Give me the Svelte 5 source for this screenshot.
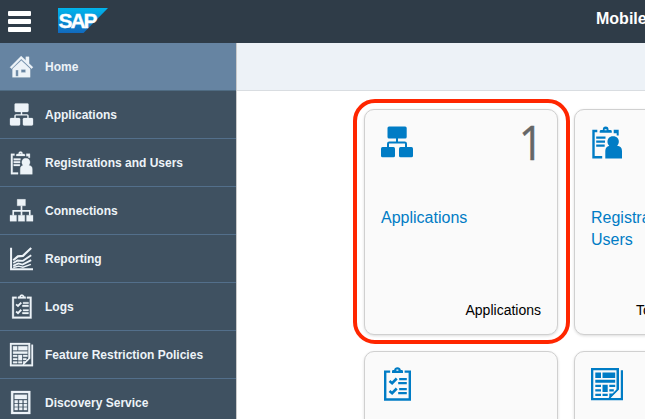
<script>
  const nav = [
    ['Home', 'home'],
    ['Applications', 'apps'],
    ['Registrations and Users', 'users'],
    ['Connections', 'tree'],
    ['Reporting', 'chart'],
    ['Logs', 'logs'],
    ['Feature Restriction Policies', 'policy'],
    ['Discovery Service', 'calc']
  ];
  const tiles = [
    { icon: 'apps', title: 'Applications', value: '1', foot: 'Applications', marked: true },
    { icon: 'users', title: 'Registrations and Users', foot: 'Total Registrations', shift: true },
    { icon: 'logs', title: 'Logs' },
    { icon: 'policy', title: 'Feature Restriction Policies' }
  ];
</script>

{#snippet icon(name, size)}
  <svg class="icon" width={size} height={size} viewBox="0 0 32 32" fill="currentColor" aria-hidden="true">
    {#if name === 'home'}
      <path d="M0 17 15.500 1.500l6.500 6V2.500h4.500v9.200L32 17l-2 2L15.700 5.600 2 19z" />
      <path fill-rule="evenodd" d="M3.500 19.300 15.700 7.600 28 19.300V31H3.500zM8 21v8.700h3.500V21zM15.500 20v4.200h6.200V20z" />
    {:else if name === 'apps'}
      <rect x="6.500" y="0.600" width="19.200" height="11.800" rx="1.500" />
      <rect x="0" y="21" width="14" height="10.200" rx="1.500" />
      <rect x="18" y="21" width="14" height="10.200" rx="1.500" />
      <path fill="none" stroke="currentColor" stroke-width="2" d="M16 12v4.500M7 21.500v-3.700q0-1.300 1.300-1.300h15.400q1.300 0 1.300 1.300v3.700" />
    {:else if name === 'users'}
      <path d="M1.300 3.800h5v2.400H3.700v23.700h7.500v2.500H1.300zM22.700 3.800h5v5.700h-2V7.200h-3z" />
      <path fill-rule="evenodd" d="M8.700 6.800V5.200q0-1.200 1.400-1.200h1.700a2.900 3.400 0 0 1 5.800 0h1.800q1.400 0 1.400 1.200v1.600zM13.600 3.200v1.100h2V3.200z" />
      <path d="M5.200 10.400h9.300v2.300H5.200zM5.200 14.400h8.800v2.300H5.200zM5.200 18.400h8.500v2.300H5.200z" />
      <path d="M22 10.200c4 0 6.200 2.700 5.800 6-.2 1.500-.8 2.600-1.700 3.600 3.200.5 4.900 2 4.900 5.200v7.400H14.300V25c0-3 1.500-4.600 4-5.200-1-1-1.700-2.100-1.800-3.600-.3-3.300 1.800-6 5.500-6z" />
    {:else if name === 'tree'}
      <path d="M10 .5h11.500v9H10zM0 22.500h9v8.500H0zM11.500 22.500h9v8.500h-9zM23 22.500h9v8.500h-9z" />
      <path fill="none" stroke="currentColor" stroke-width="2.300" d="M16 9v14M4.500 23v-6.500h23V23" />
    {:else if name === 'chart'}
      <path fill="none" stroke="currentColor" stroke-width="2.800" d="M1.500 1v30H32" />
      <path fill="none" stroke="currentColor" stroke-width="3" d="M4.500 18.500 11 13l7-.7L29.500 1.500" />
      <path fill="none" stroke="currentColor" stroke-width="2.600" d="M4.500 22.300l6-3.500 7.500.5L29.500 11.500M4.500 26.300l7-3.500 6 1.700 12-6.200" />
      <path fill="none" stroke="currentColor" stroke-width="2" d="m4.500 28.600 7.500-2 6 1.500 11-4" />
    {:else if name === 'logs'}
      <path fill-rule="evenodd" d="M3 2.500h6.200v2.300H5.400v25.400h22.200V4.800h-4V2.500H30v30.200H3z" />
      <path fill-rule="evenodd" d="M11 5V3.200Q11 2 12.300 2h.8a3.400 3.200 0 0 1 6.700 0h.9Q22 2 22 3.200V5zM15.400 1.500v1.300h2V1.500z" />
      <path d="M18.200 10h7.600v2.300h-7.600zM17.200 14h8.600v2.300h-8.600zM18.200 20h7.600v2.300h-7.600zM17.200 24h8.600v2.300h-8.600z" />
      <path fill="none" stroke="currentColor" stroke-width="2.600" d="m8.500 13 2.600 2.200 4.600-4.700M8.500 23l2.600 2.200 4.600-4.700" />
    {:else if name === 'policy'}
      <path fill-rule="evenodd" d="M0 0h28v21.500L19.500 30H29.800V2.300H32v30H0zM2.300 2.300V30H17.500l8-8.500V2.300z" />
      <path d="M4.300 4.500H10V10H4.300zM11.500 4.500h12.700V10H11.500zM4.300 11.800h19.900v3H4.300zM4.300 16.700H10V19H4.300zM11.500 16.700h5.200V24h-5.200zM18.300 16.700h5.900V19h-5.900zM4.300 21.200H10v2.300H4.300zM18.300 21.200h4.500v2.300h-4.500zM4.300 25.700H10V28H4.300zM11.500 25.700h5.200V28h-5.200zM18.300 30.500V25.500h3.500l5.200-5v1.500z" />
    {:else if name === 'calc'}
      <path fill-rule="evenodd" d="M1.500 0h26.800v32H1.500zM4.500 2.800v26.400h20.800V2.800z" />
      <path d="M6.500 5.200h17V11h-17zM6.500 13h4.300v3.600H6.500zM12.800 13h4.300v3.600h-4.300zM19.200 13h4.300v3.600h-4.300zM6.500 18h4.300v3.600H6.500zM12.800 18h4.300v3.600h-4.300zM19.200 18h4.300v3.600h-4.300zM6.500 23h4.300v3.600H6.500zM12.800 23h4.300v3.600h-4.300zM19.200 23h4.300v3.600h-4.300z" />
    {/if}
  </svg>
{/snippet}

<div class="app">
  <header>
    <div class="burger"><i></i><i></i><i></i></div>
    <svg class="logo" width="50" height="25" viewBox="0 0 50 25" role="img" aria-label="SAP">
      <defs>
        <linearGradient id="sap" x1="0" y1="0" x2="0" y2="1">
          <stop offset="0" stop-color="#00b5ed" />
          <stop offset="1" stop-color="#1269bd" />
        </linearGradient>
      </defs>
      <path d="M0 0h50L25.500 25H0z" fill="url(#sap)" />
      <text x="0.500" y="19.700" textLength="37" lengthAdjust="spacingAndGlyphs">SAP</text>
    </svg>
    <h1>Mobile Services</h1>
  </header>

  <div class="body">
    <nav>
      {#each nav as [label, glyph], i}
        <div class="item" class:active={i === 0}>
          {@render icon(glyph, 23)}
          <span>{label}</span>
        </div>
      {/each}
    </nav>

    <main>
      <div class="toolbar"></div>
      <div class="grid">
        {#each tiles as t}
          <section class="tile" class:marked={t.marked}>
            <div class="top">
              {@render icon(t.icon, 32)}
              {#if t.value}<span class="value">{t.value}</span>{/if}
            </div>
            <h2>{t.title}</h2>
            {#if t.foot}<p class:wide={t.shift}>{t.foot}</p>{/if}
          </section>
        {/each}
      </div>
    </main>
  </div>
</div>

<style>
  :global(body) { overflow: hidden; }
  .app {
    width: 645px;
    height: 419px;
    overflow: hidden;
    display: flex;
    flex-direction: column;
    background: #fff;
    font-family: "Liberation Sans", Arial, sans-serif;
  }
  header {
    flex: 0 0 43px;
    box-sizing: border-box;
    background: #2f3c48;
    color: #fff;
    display: flex;
    align-items: flex-start;
    padding: 8px 0 0 8px;
  }
  .burger { flex: 0 0 23px; padding-top: 3px; display: flex; flex-direction: column; gap: 3px; }
  .burger i { height: 5px; border-radius: 1px; background: #fff; }
  .logo { margin-left: 27px; flex: none; }
  .logo text { font-size: 20.5px; font-weight: bold; letter-spacing: -2px; fill: #fff; stroke: #fff; stroke-width: 0.3px; }
  h1 { flex: none; margin: 1px 0 0 488px; font-size: 16px; line-height: 20px; white-space: nowrap; }
  .body { flex: 1; min-height: 0; display: flex; }
  nav { flex: 0 0 236px; background: #3f5161; border-right: 1px solid #cacaca; overflow: hidden; }
  .item {
    box-sizing: border-box;
    height: 48px;
    border-bottom: 1px solid #536f8b;
    display: flex;
    align-items: center;
    gap: 12px;
    padding-left: 10px;
    color: #edf3f8;
    font-size: 12px;
    font-weight: bold;
    white-space: nowrap;
  }
  .item.active { background: #6684a2; border-color: #4f6b82; }
  .icon { display: block; flex: none; overflow: visible; }
  .item .icon { stroke: currentColor; stroke-width: 0.4px; }
  main { flex: 1; min-width: 0; overflow: hidden; }
  .toolbar { height: 47px; background: #edf2f7; border-bottom: 1px solid #d9dde1; }
  .grid {
    display: grid;
    grid-template-columns: 194px 194px;
    grid-auto-rows: 226px;
    gap: 16px;
    padding: 18px 0 0 127px;
  }
  .tile {
    position: relative;
    box-sizing: border-box;
    border: 1px solid #d0d0d0;
    border-radius: 10px;
    background: #fafafa;
    box-shadow: 0 1px 3px rgba(0, 0, 0, 0.14);
    padding: 16px;
    display: flex;
    flex-direction: column;
  }
  .tile .icon { color: #007cc5; }
  .marked::after {
    content: "";
    position: absolute;
    inset: -11px -13px -10px -12px;
    border: 4px solid #ff2600;
    border-radius: 22px;
  }
  .top { height: 81px; display: flex; justify-content: space-between; }
  .value {
    font-family: "Open Sans", "Liberation Sans", sans-serif;
    font-size: 48px;
    line-height: 32px;
    color: #666;
    -webkit-text-stroke: 0.4px #666;
    transform: scaleX(0.9);
    transform-origin: right;
    margin-right: -2px;
  }
  h2 { margin: 0; font-size: 16px; font-weight: normal; line-height: 22px; color: #007cc5; }
  p { margin: auto 0 0; font-size: 14px; line-height: 16px; text-align: right; color: #000; white-space: nowrap; }
  p.wide { text-align: left; padding-left: 45px; }
</style>
